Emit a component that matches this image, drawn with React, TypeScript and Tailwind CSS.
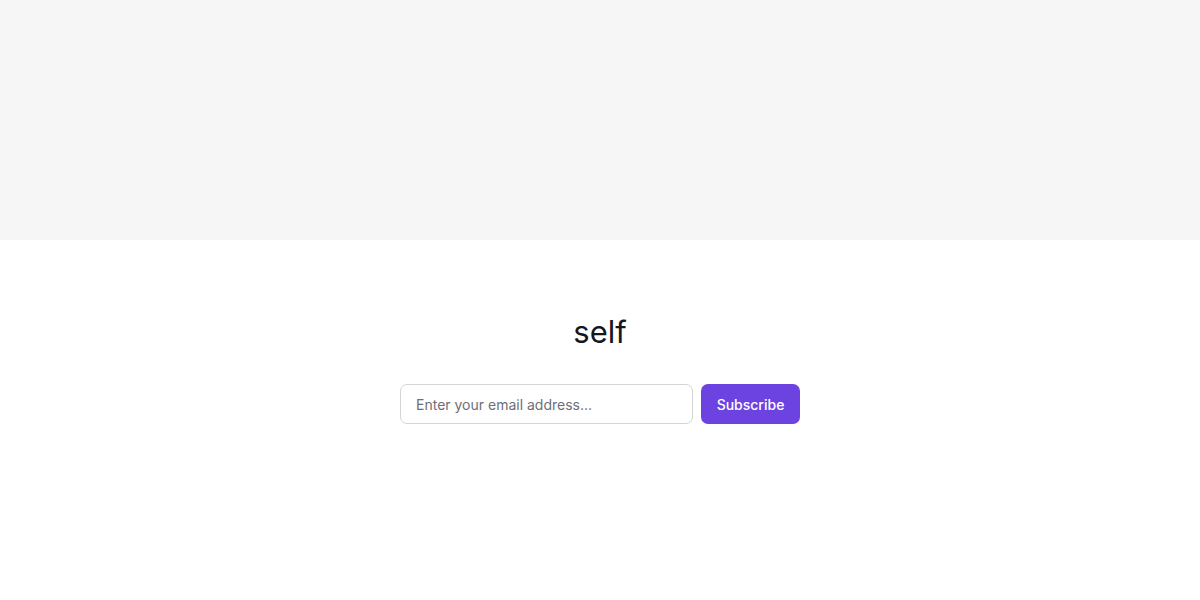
export default function App() {
  return (
    <div className="min-h-[600px] bg-white" style={{ fontFamily: "Inter, sans-serif" }}>
      <div className="h-[240px] bg-[#f6f6f6]" />
      <div className="flex flex-col items-center pt-[72px]">
        <h1 className="text-[31px] leading-[40px] text-[#15171a] font-normal">self</h1>
        <form className="mt-[32px] flex gap-2 w-[400px]" onSubmit={(e) => e.preventDefault()}>
          <input
            type="email"
            placeholder="Enter your email address..."
            className="w-[293px] h-[40px] px-[15px] rounded-[7px] border border-[#d4d4d4] text-[14px] text-[#15171a] placeholder:text-[#6e6e78] outline-none"
          />
          <button className="w-[99px] h-[40px] rounded-[7px] bg-[#6c43e0] text-white text-[14px] font-medium">
            Subscribe
          </button>
        </form>
      </div>
    </div>
  );
}
